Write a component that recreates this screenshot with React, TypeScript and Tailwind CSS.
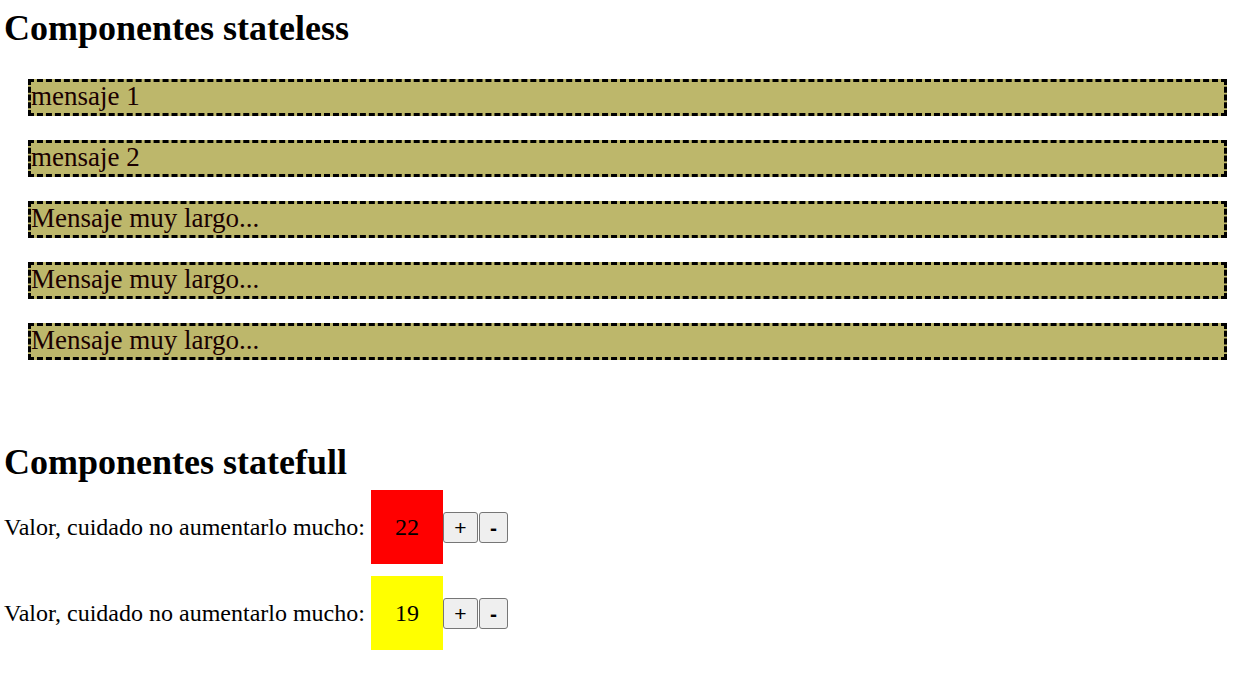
const mensajes = ['mensaje 1', 'mensaje 2', 'Mensaje muy largo...', 'Mensaje muy largo...', 'Mensaje muy largo...'];

const contadores = [
  { valor: 22, color: 'bg-[#ff0000]' },
  { valor: 19, color: 'bg-[#ffff00]' },
];

function Mensaje({ texto }: { texto: string }) {
  return (
    <div className="h-[37px] border-[3px] border-dashed border-black bg-[#bdb76b] text-[27px] leading-[29px] text-[#1a0000]">
      {texto}
    </div>
  );
}

function Contador({ valor, color }: { valor: number; color: string }) {
  return (
    <div className="flex items-center h-[74px]">
      <span className="text-[24px] leading-[28px]">Valor, cuidado no aumentarlo mucho:</span>
      <div className={`ml-[6px] flex h-[74px] w-[72px] items-center justify-center text-[24px] ${color}`}>
        {valor}
      </div>
      <div className="flex gap-[1px]">
        <button className="h-[31px] w-[35px] rounded-[3px] border border-[#767676] bg-[#efefef] font-['Liberation_Sans',sans-serif] text-[21px] leading-none">
          +
        </button>
        <button className="h-[31px] w-[29px] rounded-[3px] border border-[#767676] bg-[#efefef] font-['Liberation_Sans',sans-serif] text-[21px] font-bold leading-none">
          -
        </button>
      </div>
    </div>
  );
}

export default function App() {
  return (
    <div className="min-h-screen bg-white pl-[4px] pt-[8px] font-['Liberation_Serif',serif] text-black">
      <h1 className="text-[36px] font-bold leading-[40px]">Componentes stateless</h1>
      <div className="ml-[24px] mr-[14px] mt-[31px] flex flex-col gap-[24px]">
        {mensajes.map((m, i) => (
          <Mensaje key={i} texto={m} />
        ))}
      </div>

      <h1 className="mt-[82px] text-[36px] font-bold leading-[40px]">Componentes statefull</h1>
      <div className="mt-[8px] flex flex-col gap-[12px]">
        {contadores.map((c, i) => (
          <Contador key={i} valor={c.valor} color={c.color} />
        ))}
      </div>
    </div>
  );
}
